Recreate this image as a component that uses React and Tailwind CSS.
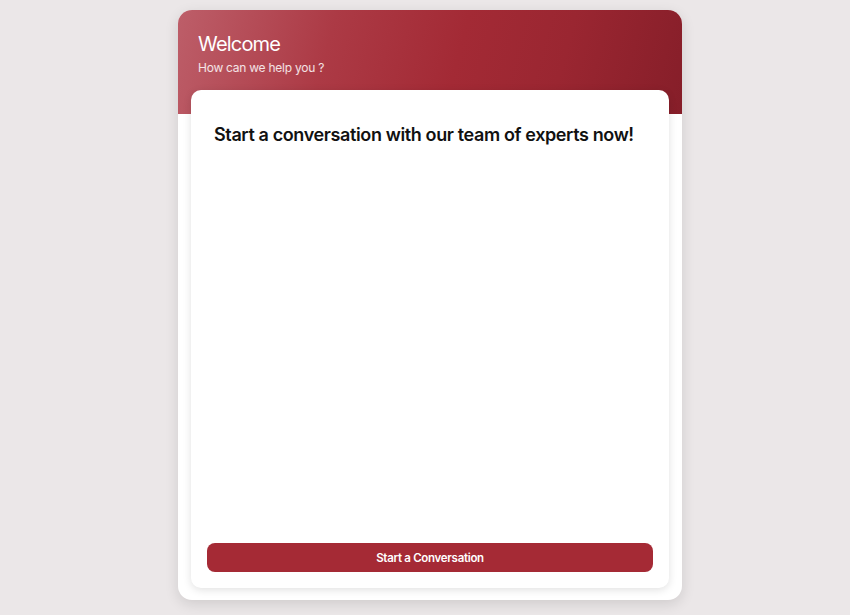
const App = () => {
  return (
    <div
      className="min-h-screen bg-[#ebe7e8] flex justify-center pt-[10px] pl-[10px]"
      style={{ fontFamily: "Inter, 'Noto Sans', sans-serif" }}
    >
      <div className="w-[504px] h-[590px] bg-white rounded-[14px] shadow-[0_4px_14px_rgba(0,0,0,0.12)] overflow-hidden flex flex-col relative">
        <div className="h-[104px] shrink-0 bg-[linear-gradient(105deg,#bd5e69_0%,#ac3a45_30%,#a32a35_55%,#9a2631_75%,#861e29_100%)] px-5 pt-[22px]">
          <h1 className="text-[20px] leading-6 text-white tracking-[-0.8px]">Welcome</h1>
          <p className="text-[12px] leading-5 text-white/85 mt-[2px] tracking-[-0.25px]">
            How can we help you ?
          </p>
        </div>
        <div className="absolute left-[13px] right-[13px] top-[80px] bottom-[12px] bg-white rounded-[10px] shadow-[0_2px_8px_rgba(0,0,0,0.12)] flex flex-col px-4 pb-[16px]">
          <h2 className="text-[18px] leading-6 font-semibold text-[#111] tracking-[-0.38px] px-[7px] pt-[33px]">
            Start a conversation with our team of experts now!
          </h2>
          <div className="flex-1" />
          <button className="h-[29px] w-full rounded-lg bg-[#a52a35] text-white text-[11.5px] leading-[30px] font-semibold tracking-[-0.3px]">
            Start a Conversation
          </button>
        </div>
      </div>
    </div>
  );
};

export default App;
